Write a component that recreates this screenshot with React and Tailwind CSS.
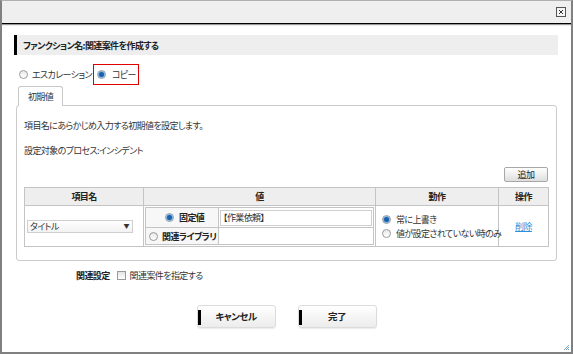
import React from "react";

const font = { fontFamily: '"Noto Sans CJK JP", "Noto Sans", sans-serif' };

const Radio = ({ checked }) => (
  <span className="inline-flex items-center justify-center w-[9px] h-[9px] rounded-full border border-[#9a9a9a] bg-gradient-to-b from-[#e8e8e8] to-white shrink-0">
    {checked && <span className="w-[5px] h-[5px] rounded-full bg-[#1d5fa8] shadow-[0_0_0_1px_#7fb2e0]" />}
  </span>
);

const CloseIcon = () => (
  <svg width="10" height="10" viewBox="0 0 10 10">
    <rect x="0.5" y="0.5" width="9" height="9" fill="#f4f4f4" stroke="#555" />
    <path d="M3 3 L7 7 M7 3 L3 7" stroke="#333" strokeWidth="1" />
  </svg>
);

const BigButton = ({ children }) => (
  <button className="relative w-[79px] h-[23px] rounded-[3px] border border-[#dcdcdc] bg-gradient-to-b from-white to-[#ececec] shadow-[0_1px_1px_rgba(0,0,0,0.08)] font-bold text-[9.5px] tracking-[-0.5px] text-[#222] flex items-center justify-center">
    <span className="absolute left-0 top-[4px] w-[3px] h-[15px] bg-black" />
    {children}
  </button>
);

export default function App() {
  return (
    <div
      className="relative w-[573px] h-[354px] bg-white border-x-2 border-b-2 border-t border-x-[#808080] border-b-[#808080] border-t-[#b0b0b0] text-[#222] text-[9px] tracking-[-0.6px] leading-none whitespace-nowrap [font-feature-settings:'palt'] overflow-hidden"
      style={font}
    >
      {/* header */}
      <div className="h-[23px] bg-[#efefef] border-b border-black shadow-[0_1px_1px_#999] flex items-center justify-end pr-[5px]">
        <CloseIcon />
      </div>

      <div className="pl-[12px] pr-[13px]">
        {/* section title */}
        <div className="mt-[11px] h-[20px] bg-[#eeeeee] border-l-[3px] border-black flex items-center pl-[6px] font-bold">
          ファンクション名:関連案件を作成する
        </div>

        {/* radios */}
        <div className="mt-[9px] h-[21px] flex items-center pl-[5px]">
          <Radio />
          <span className="ml-[4px] text-[#333]">エスカレーション</span>
          <div className="ml-[1px] h-[21px] w-[46px] border border-[#e00000] flex items-center pl-[3px]">
            <Radio checked />
            <span className="ml-[6px] text-[#333]">コピー</span>
          </div>
        </div>

        {/* tab */}
        <div className="ml-[4px] mt-[1px] w-[45px] h-[20px] border border-b-0 border-[#c8c8c8] rounded-t-[3px] bg-white flex items-center justify-center relative z-10 -mb-px text-[#333]">
          初期値
        </div>

        {/* panel */}
        <div className="ml-[2px] mr-px border border-[#cccccc] rounded-[3px] px-[7px] pt-[15px] pb-[13px]">
          <div className="text-[#333]">項目名にあらかじめ入力する初期値を設定します。</div>
          <div className="mt-[16px] text-[#333]">設定対象のプロセス:インシデント</div>

          <div className="mt-[12px] flex justify-end pr-px">
            <button className="w-[44px] h-[15px] rounded-[2px] border border-[#a8a8a8] bg-gradient-to-b from-white to-[#dedede] text-[9px] text-[#222] flex items-center justify-center">
              追加
            </button>
          </div>

          <table className="mt-[5px] w-[524px] table-fixed border-collapse border border-[#c4c4c4]">
            <colgroup>
              <col className="w-[119px]" />
              <col className="w-[232px]" />
              <col className="w-[123px]" />
              <col className="w-[50px]" />
            </colgroup>
            <thead>
              <tr className="h-[18px] bg-[#eeeeee] font-bold">
                <th className="border border-[#c4c4c4] font-bold">項目名</th>
                <th className="border border-[#c4c4c4] font-bold">値</th>
                <th className="border border-[#c4c4c4] font-bold">動作</th>
                <th className="border border-[#c4c4c4] font-bold">操作</th>
              </tr>
            </thead>
            <tbody>
              <tr className="h-[41px]">
                <td className="border border-[#c4c4c4] px-[2px]">
                  <div className="w-[106px] h-[13px] border border-[#cfcfcf] bg-gradient-to-b from-white to-[#f2f2f2] flex items-center justify-between pl-[2px] pr-[3px] text-[#333]">
                    <span>タイトル</span>
                    <span className="text-[6px] text-[#333]">▼</span>
                  </div>
                </td>
                <td className="border border-[#c4c4c4] p-[1px]">
                  <table className="w-full table-fixed border-collapse border border-[#c4c4c4]">
                    <colgroup>
                      <col className="w-[73px]" />
                      <col />
                    </colgroup>
                    <tbody>
                      <tr className="h-[20px]">
                        <td className="border border-[#c4c4c4] bg-[#f7f7f7]">
                          <div className="flex items-center pl-[19px] font-bold">
                            <Radio checked />
                            <span className="ml-[5px]">固定値</span>
                          </div>
                        </td>
                        <td className="border border-[#c4c4c4] px-px">
                          <div className="h-[16px] border border-[#cfcfcf] flex items-center pl-[2px] text-[#333]">
                            【作業依頼】
                          </div>
                        </td>
                      </tr>
                      <tr className="h-[17px]">
                        <td className="border border-[#c4c4c4] bg-[#f7f7f7]">
                          <div className="flex items-center pl-[3px] font-bold">
                            <Radio />
                            <span className="ml-[4px]">関連ライブラリ</span>
                          </div>
                        </td>
                        <td className="border border-[#c4c4c4]"></td>
                      </tr>
                    </tbody>
                  </table>
                </td>
                <td className="border border-[#c4c4c4] pl-[6px]">
                  <div className="flex items-center">
                    <Radio checked />
                    <span className="ml-[5px] text-[#333]">常に上書き</span>
                  </div>
                  <div className="flex items-center mt-[5px]">
                    <Radio />
                    <span className="ml-[5px] text-[#333]">値が設定されていない時のみ</span>
                  </div>
                </td>
                <td className="border border-[#c4c4c4] text-center">
                  <a className="text-[#2d8fd8] underline">削除</a>
                </td>
              </tr>
            </tbody>
          </table>
        </div>

        {/* related settings */}
        <div className="mt-[10px] flex items-center pl-[62px]">
          <span className="font-bold">関連設定</span>
          <span className="ml-[7px] w-[9px] h-[9px] border border-[#9a9a9a] bg-gradient-to-b from-[#e4e4e4] to-white" />
          <span className="ml-[4px] text-[#333]">関連案件を指定する</span>
        </div>

        {/* buttons */}
        <div className="mt-[25px] flex justify-center gap-[22px] pl-[1px]">
          <BigButton>キャンセル</BigButton>
          <BigButton>完了</BigButton>
        </div>
      </div>

      {/* resize grip */}
      <svg className="absolute right-[1px] bottom-[1px]" width="7" height="7" viewBox="0 0 7 7">
        <path d="M6 1 L1 6 M6 3 L3 6 M6 5 L5 6" stroke="#7aa6c8" strokeWidth="1" />
      </svg>
    </div>
  );
}
